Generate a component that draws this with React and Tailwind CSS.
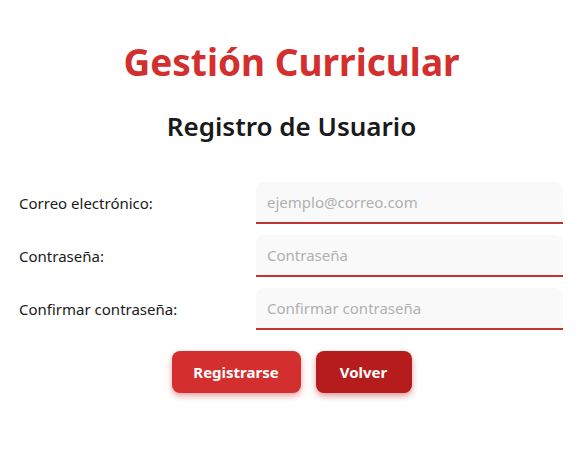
import React from 'react';

const fields = [
  { label: 'Correo electrónico:', type: 'email', placeholder: 'ejemplo@correo.com' },
  { label: 'Contraseña:', type: 'password', placeholder: 'Contraseña' },
  { label: 'Confirmar contraseña:', type: 'password', placeholder: 'Confirmar contraseña' },
];

export default function App() {
  return (
    <div className="min-h-[461px] w-full bg-white font-['Noto_Sans',sans-serif] text-[#1a1a1a]">
      <div className="flex flex-col items-center pt-[36px]">
        <h1 className="text-[37px] font-bold leading-[52px] text-[#d32f2f]">Gestión Curricular</h1>
        <h2 className="mt-[20px] text-[26px] font-semibold leading-[36px] text-[#1a1a1a]">Registro de Usuario</h2>
      </div>

      <form className="mt-[38px] flex flex-col gap-[11px] px-[19px]">
        {fields.map((f) => (
          <div key={f.label} className="grid grid-cols-[237px_307px] items-center">
            <label className="text-[15px] text-[#1a1a1a]">{f.label}</label>
            <input
              type={f.type}
              placeholder={f.placeholder}
              className="h-[42px] w-full rounded-t-[8px] border-b-2 border-[#c13333] bg-[#f9f9f9] px-[11px] text-[15px] outline-none placeholder:text-[#b0b0b0]"
            />
          </div>
        ))}

        <div className="mt-[10px] flex justify-center gap-[15px]">
          <button
            type="button"
            className="h-[42px] w-[129px] rounded-[8px] bg-[#d32f2f] text-[15px] font-bold text-white shadow-[0_3px_6px_rgba(211,47,47,0.45)]"
          >
            Registrarse
          </button>
          <button
            type="button"
            className="h-[42px] w-[96px] rounded-[8px] bg-[#b71c1c] text-[15px] font-bold text-white shadow-[0_3px_6px_rgba(183,28,28,0.45)]"
          >
            Volver
          </button>
        </div>
      </form>
    </div>
  );
}
